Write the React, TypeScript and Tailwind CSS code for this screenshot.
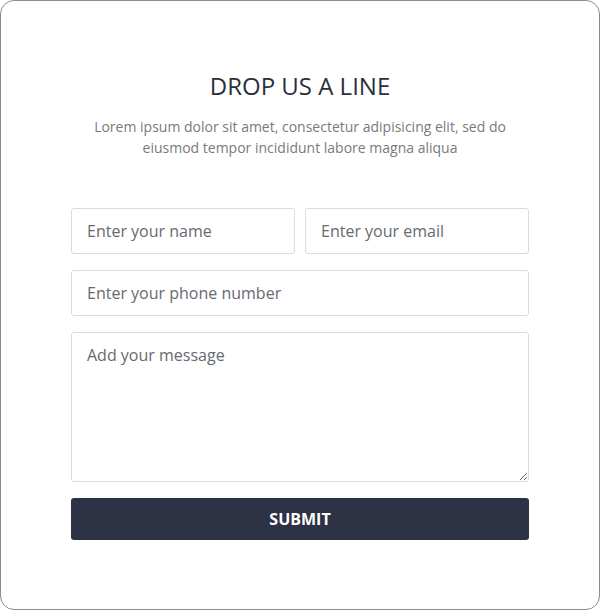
import React from "react";

export default function App() {
  const field =
    "h-[46px] border border-[#dcdcdc] rounded-[3px] px-[15px] text-[16px] text-[#555] placeholder:text-[#666a70] outline-none";
  return (
    <div className="w-[600px] h-[610px] bg-white font-['Open_Sans','Noto_Sans',Arial,sans-serif]">
      <div className="w-[600px] h-[610px] border border-[#8c8c8c] rounded-[14px] bg-white px-[70px] pt-[69px] flex flex-col items-center">
        <h1 className="text-[24px] leading-[32px] font-normal text-[#2b2f3b]">
          DROP US A LINE
        </h1>
        <p className="mt-[14px] text-[14px] leading-[21px] text-[#7a7a7a] text-center">
          Lorem ipsum dolor sit amet, consectetur adipisicing elit, sed do
          <br />
          eiusmod tempor incididunt labore magna aliqua
        </p>
        <form className="mt-[50px] w-[458px] flex flex-col gap-[16px]" onSubmit={(e) => e.preventDefault()}>
          <div className="flex gap-[10px]">
            <input type="text" placeholder="Enter your name" className={`flex-1 min-w-0 ${field}`} />
            <input type="email" placeholder="Enter your email" className={`flex-1 min-w-0 ${field}`} />
          </div>
          <input type="text" placeholder="Enter your phone number" className={`w-full ${field}`} />
          <textarea
            placeholder="Add your message"
            className="w-full h-[150px] border border-[#dcdcdc] rounded-[3px] px-[15px] py-[10px] text-[16px] leading-[24px] text-[#555] placeholder:text-[#666a70] outline-none resize-y"
          />
          <button
            type="submit"
            className="w-full h-[42px] bg-[#2e3245] rounded-[3px] text-white text-[16px] font-bold"
          >
            SUBMIT
          </button>
        </form>
      </div>
    </div>
  );
}
